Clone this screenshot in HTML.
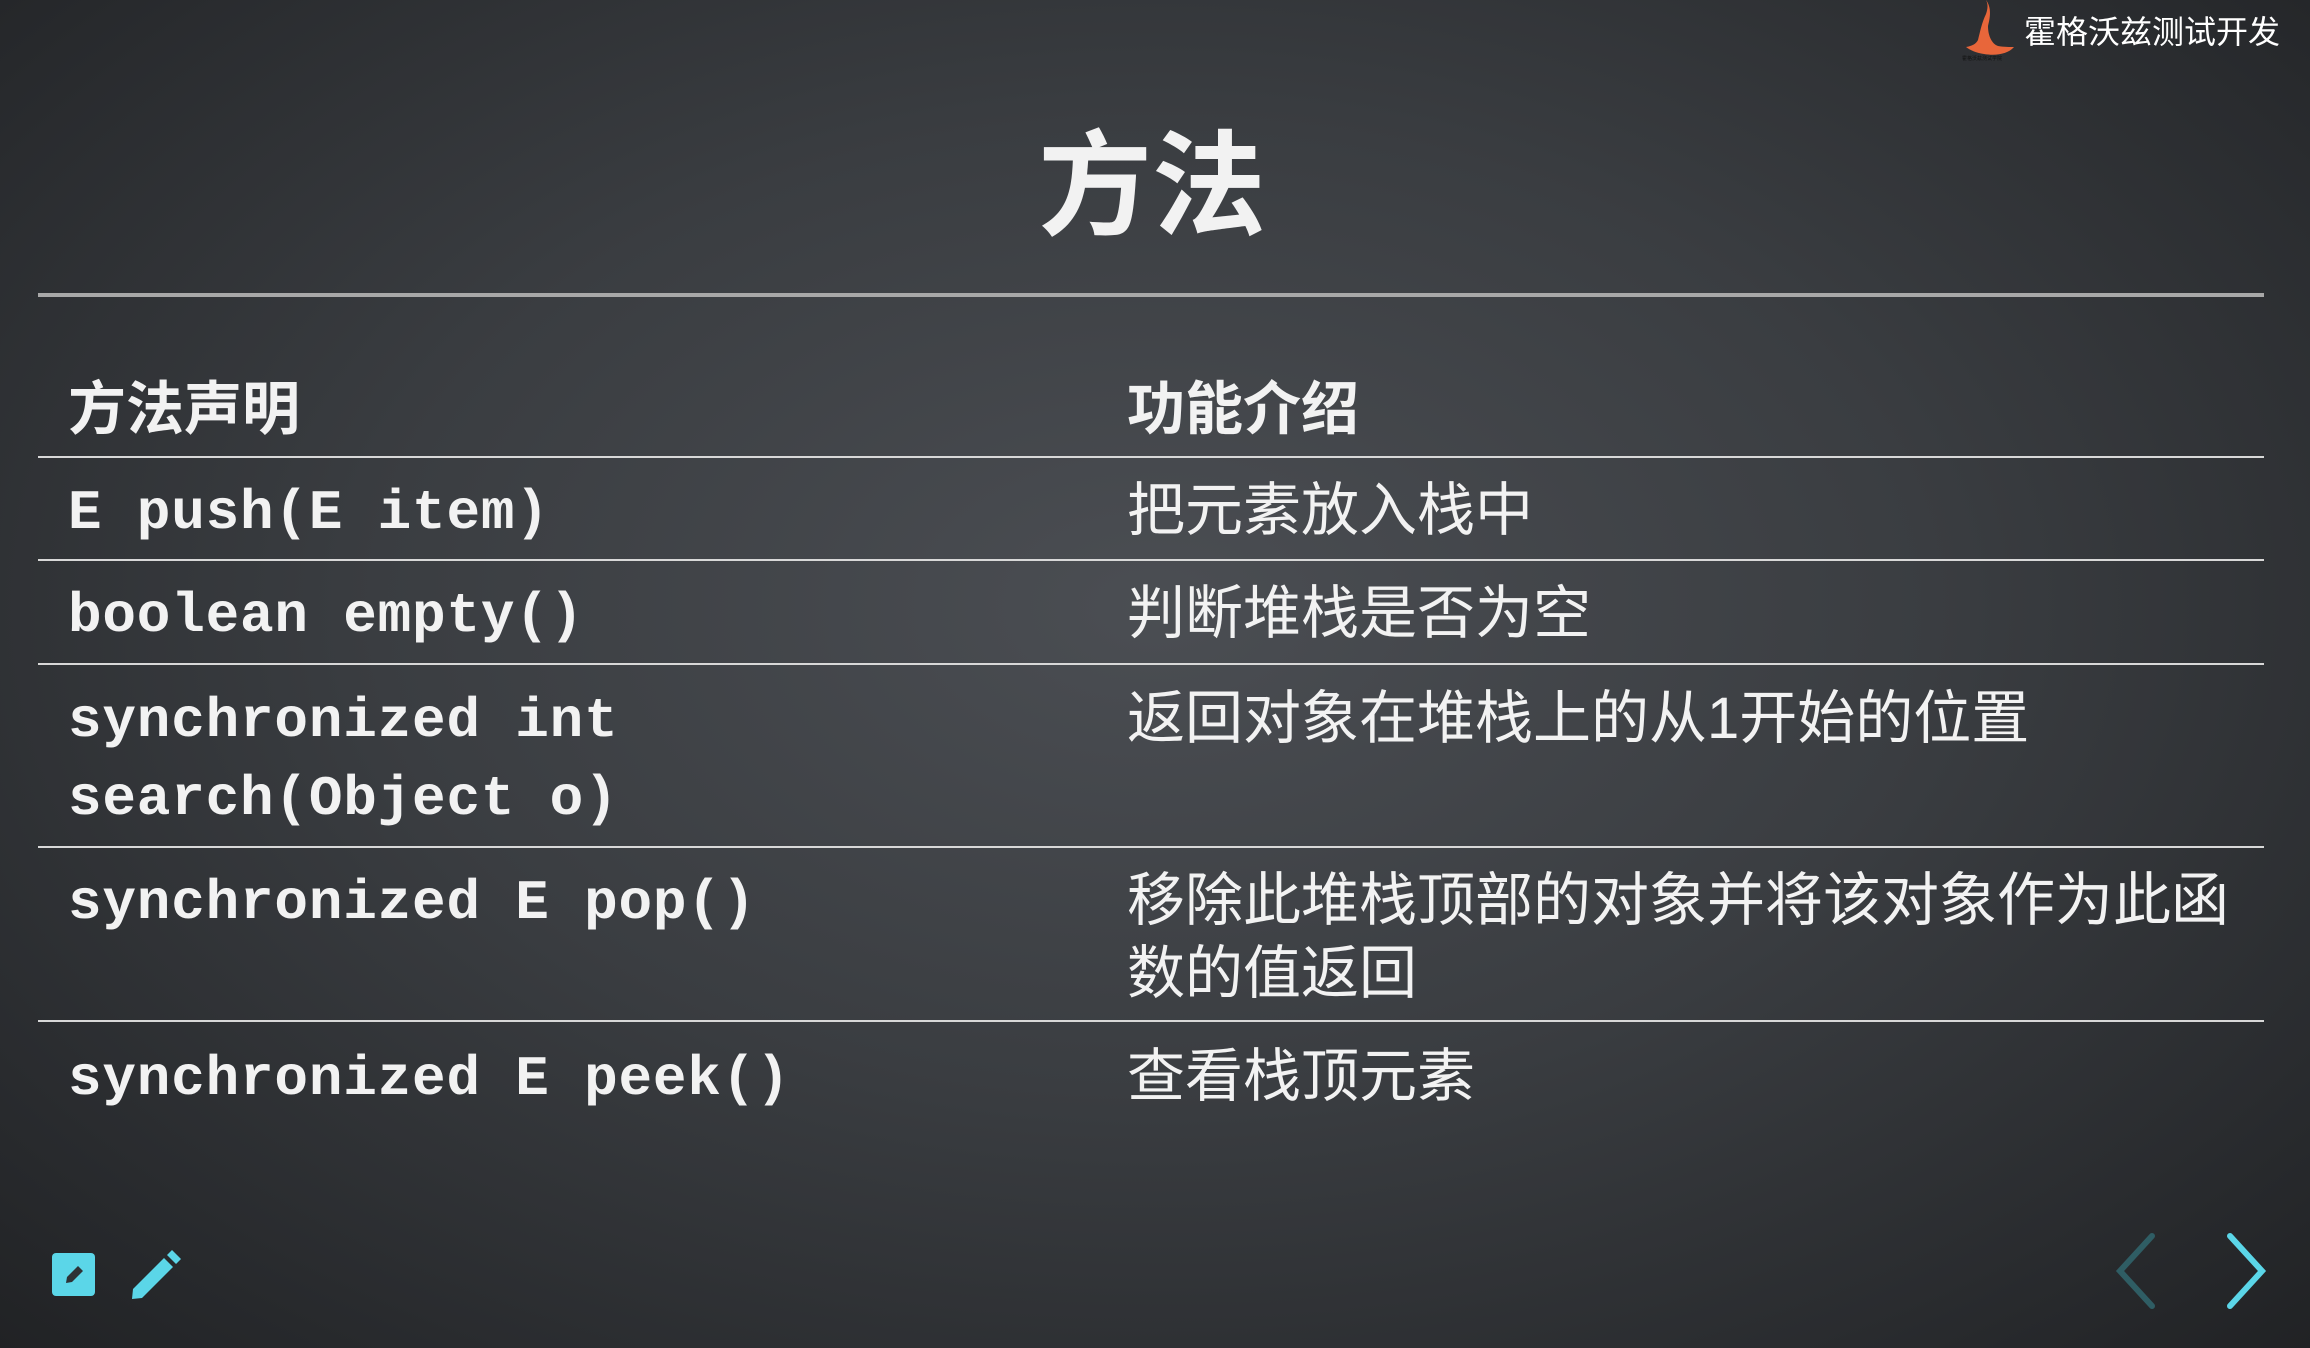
<!DOCTYPE html>
<html><head><meta charset="utf-8"><style>
html,body{margin:0;padding:0}
body{width:2310px;height:1348px;overflow:hidden;position:relative;
background:radial-gradient(ellipse 75% 80% at 50% 45%,#4b4e53 0%,#3a3d41 45%,#26282b 85%,#1f2022 100%);
font-family:"Liberation Sans","Noto Sans CJK SC",sans-serif;color:#f2f2f2}
.a{position:absolute;white-space:nowrap;line-height:80px;height:80px}
.m{font-family:"Liberation Mono",monospace;font-weight:bold;font-size:56px;letter-spacing:0.8px}
.c{font-size:58px}
.h{font-size:58px;font-weight:bold}
.ln{position:absolute;left:38px;width:2226px;height:2px;background:#d8d8d8}
</style></head><body>
<svg style="position:absolute;left:1958px;top:0" width="66" height="62" viewBox="0 0 66 62">
<path d="M28 0 C34 8 32 18 30 26 C30 36 34 44 40 46 C46 47 52 47 56 47 C50 54 38 56 26 54 C18 53 12 50 8 47 C14 46 18 44 20 40 C22 32 24 22 28 14 C30 8 30 4 28 0Z" fill="#e8663a"/>
<text x="4" y="60" font-size="5" fill="#111">霍格沃兹测试学院</text>
</svg>
<div class="a" style="left:2024px;top:12px;height:40px;line-height:40px;font-size:32px;color:#fff">霍格沃兹测试开发</div>
<div class="a" style="left:1038px;top:128px;height:120px;line-height:120px;font-size:114px;font-weight:bold;width:240px">方法</div>
<div style="position:absolute;left:38px;top:293px;width:2226px;height:4px;background:#a8a8a8"></div>
<div class="a h" style="left:68px;top:370px">方法声明</div>
<div class="a h" style="left:1127px;top:370px">功能介绍</div>
<div class="ln" style="top:456px"></div>
<div class="a m" style="left:68px;top:473px">E push(E item)</div>
<div class="a c" style="left:1127px;top:471px">把元素放入栈中</div>
<div class="ln" style="top:559px"></div>
<div class="a m" style="left:68px;top:576px">boolean empty()</div>
<div class="a c" style="left:1127px;top:574px">判断堆栈是否为空</div>
<div class="ln" style="top:663px"></div>
<div class="a m" style="left:68px;top:681px">synchronized int</div>
<div class="a m" style="left:68px;top:759px">search(Object o)</div>
<div class="a c" style="left:1127px;top:679px">返回对象在堆栈上的从1开始的位置</div>
<div class="ln" style="top:846px"></div>
<div class="a m" style="left:68px;top:863px">synchronized E pop()</div>
<div class="a c" style="left:1127px;top:861px">移除此堆栈顶部的对象并将该对象作为此函</div>
<div class="a c" style="left:1127px;top:934px">数的值返回</div>
<div class="ln" style="top:1020px"></div>
<div class="a m" style="left:68px;top:1039px">synchronized E peek()</div>
<div class="a c" style="left:1127px;top:1037px">查看栈顶元素</div>
<svg style="position:absolute;left:52px;top:1253px" width="44" height="44" viewBox="0 0 44 44">
<rect x="0" y="0" width="43" height="43" rx="4" fill="#5bd6e8"/>
<path d="M14 30 L15 24 L26 13 L31 18 L20 29Z" fill="#2e3236"/>
</svg>
<svg style="position:absolute;left:130px;top:1249px" width="52" height="52" viewBox="0 0 52 52">
<path d="M2 50 L3 40 L34 9 L43 18 L12 49Z M37 6 L42 1 L51 10 L46 15Z" fill="#5bd6e8"/>
</svg>
<svg style="position:absolute;left:2112px;top:1232px" width="48" height="78" viewBox="0 0 48 78">
<path d="M40 4 L8 39 L40 74" fill="none" stroke="#2f5d64" stroke-width="6" stroke-linecap="round"/>
</svg>
<svg style="position:absolute;left:2222px;top:1232px" width="48" height="78" viewBox="0 0 48 78">
<path d="M8 4 L40 39 L8 74" fill="none" stroke="#5bd6e8" stroke-width="6" stroke-linecap="round"/>
</svg>
</body></html>
